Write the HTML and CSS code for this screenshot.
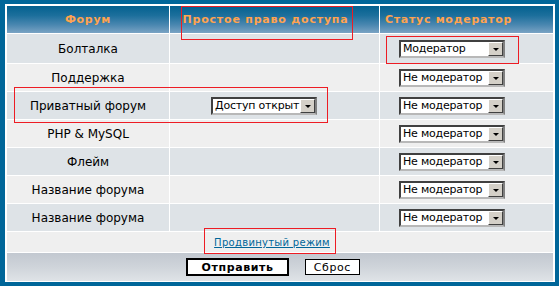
FILE: index.html
```html
<!DOCTYPE html>
<html lang="ru">
<head>
    <meta charset="UTF-8">
    <title>Права доступа</title>
    <link rel="stylesheet" href="styles.css">
</head>
<body>
    <div class="forumline">
        <table class="grid">
            <colgroup>
                <col class="c1">
                <col class="c2">
                <col class="c3">
            </colgroup>
            <tr class="head">
                <th>Форум</th>
                <th class="mid">Простое право доступа</th>
                <th class="last">Статус модератор</th>
            </tr>
            <tr class="row2 first">
                <td class="name">Болталка</td>
                <td></td>
                <td class="mod"><span class="select"><span class="val">Модератор</span><span class="btn"></span></span></td>
            </tr>
            <tr class="row1">
                <td class="name">Поддержка</td>
                <td></td>
                <td class="mod"><span class="select"><span class="val">Не модератор</span><span class="btn"></span></span></td>
            </tr>
            <tr class="row2">
                <td class="name">Приватный форум</td>
                <td class="access"><span class="select"><span class="val">Доступ открыт</span><span class="btn"></span></span></td>
                <td class="mod"><span class="select"><span class="val">Не модератор</span><span class="btn"></span></span></td>
            </tr>
            <tr class="row1">
                <td class="name">PHP &amp; MySQL</td>
                <td></td>
                <td class="mod"><span class="select"><span class="val">Не модератор</span><span class="btn"></span></span></td>
            </tr>
            <tr class="row2">
                <td class="name">Флейм</td>
                <td></td>
                <td class="mod"><span class="select"><span class="val">Не модератор</span><span class="btn"></span></span></td>
            </tr>
            <tr class="row1">
                <td class="name">Название форума</td>
                <td></td>
                <td class="mod"><span class="select"><span class="val">Не модератор</span><span class="btn"></span></span></td>
            </tr>
            <tr class="row2">
                <td class="name">Название форума</td>
                <td></td>
                <td class="mod"><span class="select"><span class="val">Не модератор</span><span class="btn"></span></span></td>
            </tr>
            <tr class="row1 linkrow">
                <td colspan="3"><a href="#" class="gensmall">Продвинутый режим</a></td>
            </tr>
            <tr class="catBottom">
                <td colspan="3">
                    <button class="mainoption">Отправить</button>
                    <button class="liteoption">Сброс</button>
                </td>
            </tr>
        </table>

        <!-- red marks drawn over the screenshot -->
        <div class="mark mark-head"></div>
        <div class="mark mark-mod"></div>
        <div class="mark mark-private"></div>
        <div class="mark mark-link"></div>
    </div>
</body>
</html>
```

FILE: styles.css
```css
body {
    margin: 0;
    background: #fff;
    font-family: 'DejaVu Sans', Verdana, sans-serif;
}
.forumline {
    position: relative;
    width: 559px;
    box-sizing: border-box;
    border: 4px solid #006699;
    border-left-width: 5px;
    padding: 1px 1px 0 1px;
    background: #fff;
}
.grid {
    border-collapse: separate;
    border-spacing: 1px;
    table-layout: fixed;
    width: 548px;
}
.c1 { width: 162px; }
.c2 { width: 209px; }
.c3 { width: 173px; }

.head th {
    height: 27px;
    padding: 0;
    color: #ffa34f;
    font-size: 11px;
    font-weight: bold;
    letter-spacing: 0.7px;
    background: linear-gradient(to bottom, #03608f 0%, #1c6f9c 35%, #4a87b0 70%, #7aa3c4 100%);
}
.head th.mid { padding-right: 18px; letter-spacing: 0.8px; }
.head th.last { padding-right: 36px; }

td {
    height: 27px;
    padding: 0;
    font-size: 12px;
    color: #000;
    vertical-align: middle;
}
.first td { height: 29px; }
.row1 td { background: #efefef; }
.row2 td { background: #dee3e7; }
td.name { text-align: center; }
td.access { padding-left: 41px; }
td.mod { padding-left: 19px; }

.select {
    display: inline-flex;
    align-items: center;
    width: 106px;
    height: 18px;
    box-sizing: border-box;
    border: 2px solid;
    border-color: #404040 #808080 #b8b8b8 #404040;
    background: #fff;
    vertical-align: middle;
}
.select .val {
    flex: 1;
    padding-left: 2px;
    font-size: 11px;
    letter-spacing: -0.2px;
    white-space: nowrap;
    overflow: hidden;
}
.select .btn {
    position: relative;
    flex: none;
    width: 15px;
    height: 14px;
    box-sizing: border-box;
    background: #d4d0c8;
    border: 1px solid;
    border-color: #fff #404040 #404040 #fff;
}
.select .btn::after {
    content: "";
    position: absolute;
    left: 4px;
    top: 5px;
    border-left: 3px solid transparent;
    border-right: 3px solid transparent;
    border-top: 3px solid #000;
}

.linkrow td {
    height: 20px;
    text-align: center;
    padding-right: 16px;
}
.gensmall {
    font-size: 10px;
    color: #006699;
    letter-spacing: 0.3px;
}

.catBottom td {
    height: 28px;
    text-align: center;
    padding-right: 14px;
    background: linear-gradient(to bottom, #c2c8d0 0%, #cfd4da 50%, #dfe3e7 100%);
}
.catBottom button {
    font-family: 'DejaVu Sans', Verdana, sans-serif;
    background: #fff;
    color: #000;
    vertical-align: middle;
    padding: 0;
}
.mainoption {
    width: 103px;
    height: 18px;
    border: 2px solid #000;
    font-size: 11px;
    font-weight: bold;
    letter-spacing: 0.6px;
    margin-right: 12px;
}
.liteoption {
    width: 55px;
    height: 16px;
    border: 1px solid #000;
    font-size: 11px;
    letter-spacing: 0.6px;
}

.mark {
    position: absolute;
    border: 1px solid #ed1c24;
}
.mark-head { left: 176px; top: 2px; width: 170px; height: 32px; }
.mark-mod { left: 381px; top: 32px; width: 131px; height: 26px; }
.mark-private { left: 9px; top: 83px; width: 312px; height: 34px; }
.mark-link { left: 199px; top: 224px; width: 130px; height: 24px; }
```
